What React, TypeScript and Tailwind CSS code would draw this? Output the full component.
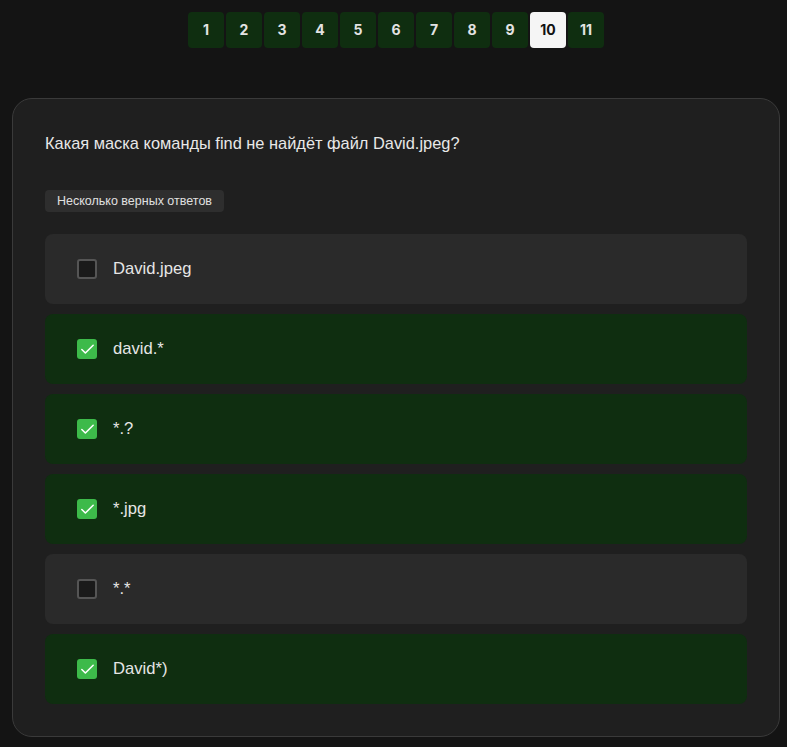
import { Check } from 'lucide-react';

const pages = [1, 2, 3, 4, 5, 6, 7, 8, 9, 10, 11];

const answers = [
  { text: 'David.jpeg', checked: false },
  { text: 'david.*', checked: true },
  { text: '*.?', checked: true },
  { text: '*.jpg', checked: true },
  { text: '*.*', checked: false },
  { text: 'David*)', checked: true },
];

export default function App() {
  return (
    <div className="min-h-[747px] bg-[#141414] pt-3 pb-[10px] px-3 font-['Liberation_Sans',Arial,sans-serif]">
      <div className="flex justify-center gap-[2px] ml-[5px]">
        {pages.map((p) => (
          <button
            key={p}
            className={`w-9 h-9 rounded-[4px] flex items-center justify-center text-sm font-bold font-['Inter',sans-serif] ${
              p === 10 ? 'bg-[#f5f5f5] text-[#111]' : 'bg-[#0f2e10] text-[#e3e3e3]'
            }`}
          >
            {p}
          </button>
        ))}
      </div>

      <div className="mt-[50px] w-[768px] rounded-[20px] border border-[#3a3a3a] bg-[#1f1f1f] px-[32px] pt-[32px] pb-[32px]">
        <p className="text-[16.4px] leading-6 text-[#e8e8e8]">Какая маска команды find не найдёт файл David.jpeg?</p>

        <div className="mt-[35px] inline-flex h-[22px] items-center rounded-[4px] bg-[#2e2e2e] px-3 text-[12.5px] text-[#e0e0e0]">
          Несколько верных ответов
        </div>

        <div className="mt-[22px] flex flex-col gap-[10px]">
          {answers.map((a) => (
            <div
              key={a.text}
              className={`h-[70px] rounded-[8px] flex items-center gap-4 pl-[32px] ${
                a.checked ? 'bg-[#0f2e10]' : 'bg-[#2a2a2a]'
              }`}
            >
              {a.checked ? (
                <div className="w-5 h-5 rounded-[3px] bg-[#3dba4a] flex items-center justify-center">
                  <Check className="w-[17px] h-[17px] text-white" strokeWidth={2.2} />
                </div>
              ) : (
                <div className="w-5 h-5 rounded-[3px] border-2 border-[#555] bg-[#1a1a1a]" />
              )}
              <span className="text-[16.6px] text-[#e6e6e6]">{a.text}</span>
            </div>
          ))}
        </div>
      </div>
    </div>
  );
}
